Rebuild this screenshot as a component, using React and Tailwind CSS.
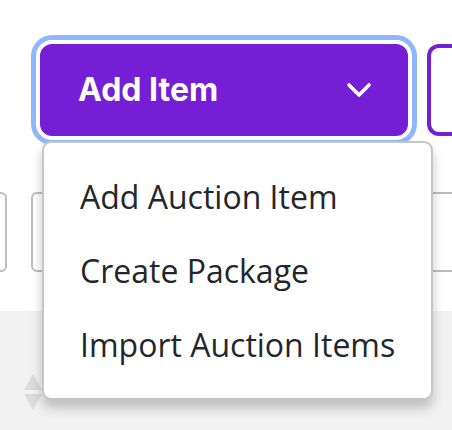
import React from "react";

function Chevron() {
  return (
    <svg width="26" height="16" viewBox="0 0 26 16" fill="none">
      <polyline
        points="3,3 13,13 23,3"
        stroke="white"
        strokeWidth="3.6"
        strokeLinecap="round"
        strokeLinejoin="round"
      />
    </svg>
  );
}

function SortIcon() {
  return (
    <svg width="20" height="36" viewBox="0 0 20 36">
      <polygon points="10,0 19,16 1,16" fill="#dcdcdc" />
      <polygon points="10,36 19,20 1,20" fill="#dcdcdc" />
    </svg>
  );
}

const items = ["Add Auction Item", "Create Package", "Import Auction Items"];

export default function App() {
  return (
    <div className="w-[452px] h-[430px] overflow-hidden bg-white flex flex-col">
      {/* toolbar */}
      <div className="relative pt-[44px] pl-[40px] flex gap-[19px]">
        <button className="w-[368px] h-[92px] shrink-0 rounded-[12px] bg-[#741ed6] ring-[5px] ring-[#90b7fb] ring-offset-4 ring-offset-white flex items-center justify-between pl-[38px] pr-[36px] text-white font-bold text-[32px] font-['Inter',sans-serif] whitespace-nowrap">
          <span>Add Item</span>
          <Chevron />
        </button>
        <div className="w-[80px] h-[92px] shrink-0 rounded-l-[12px] border-[4px] border-r-0 border-[#741ed6] bg-white" />

        {/* dropdown menu */}
        <div className="absolute z-10 left-[42px] top-[141px] w-[391px] h-[259px] bg-white rounded-[9px] border-2 border-[#c6c6c6] shadow-[0_8px_12px_rgba(0,0,0,0.22)] pt-[17px] pb-[16px] flex flex-col font-['Open_Sans',sans-serif] text-[32px] text-[#23272b]">
          {items.map((label) => (
            <div key={label} className="h-[74px] flex items-center px-[36px] leading-[44px] whitespace-nowrap">
              {label}
            </div>
          ))}
        </div>
      </div>

      {/* filter row */}
      <div className="mt-[56px] flex gap-[24px]">
        <div className="w-[7px] h-[80px] shrink-0 rounded-r-[6px] border-2 border-l-0 border-[#bdbdbd]" />
        <div className="w-[460px] h-[80px] shrink-0 rounded-[6px] border-2 border-[#bdbdbd]" />
      </div>

      {/* table header */}
      <div className="mt-[39px] flex-1 bg-[#f2f2f2] pl-[23px] pt-[63px]">
        <SortIcon />
      </div>
    </div>
  );
}
